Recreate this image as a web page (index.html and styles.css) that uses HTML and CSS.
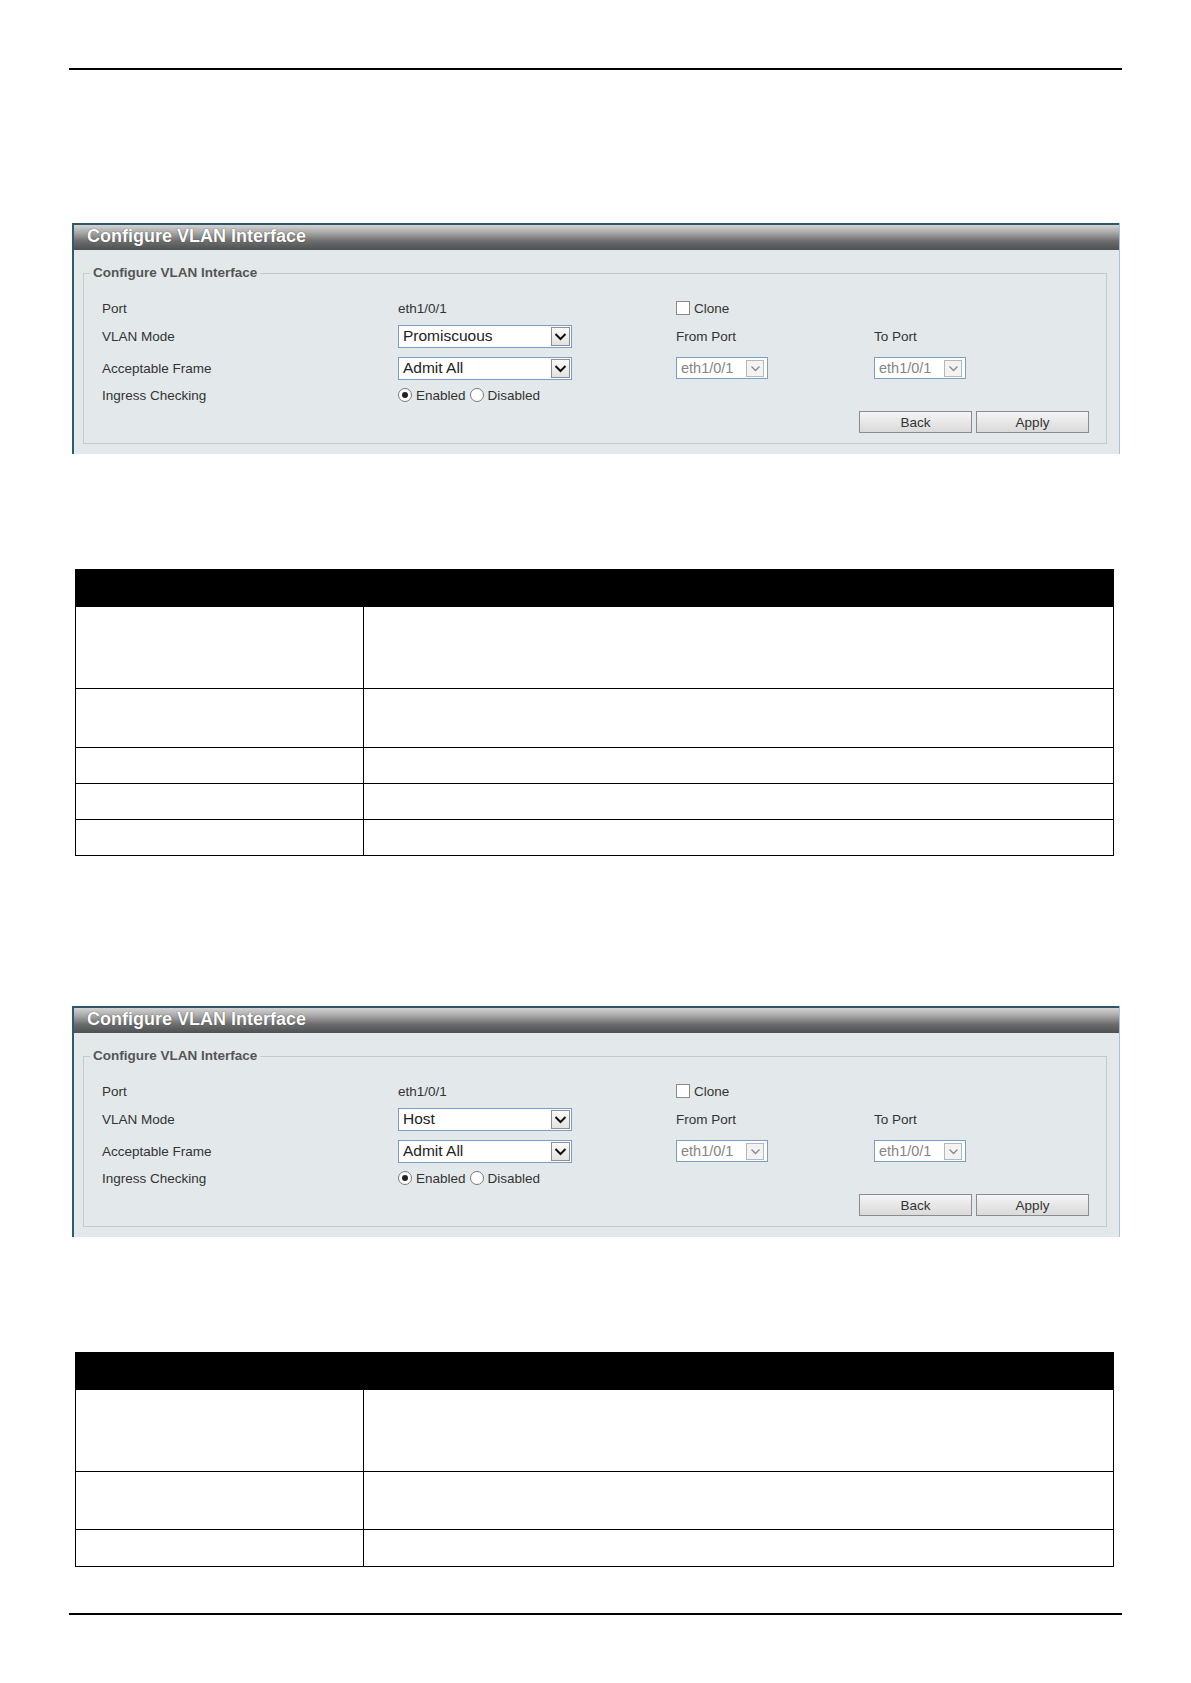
FILE: index.html
```html
<!DOCTYPE html>
<html lang="en">
<head>
    <meta charset="UTF-8">
    <title>Configure VLAN Interface</title>
    <link rel="stylesheet" href="styles.css">
</head>
<body>
    <div class="page">
        <div class="rule rule-top"></div>

        <div class="panel panel-first">
            <div class="panel-title">Configure VLAN Interface</div>
            <fieldset class="group">
                <legend>Configure VLAN Interface</legend>
                <div class="form-grid">
                    <div class="label">Port</div>
                    <div class="value">eth1/0/1</div>
                    <div class="value"><span class="checkbox"></span>Clone</div>
                    <div></div>

                    <div class="label">VLAN Mode</div>
                    <div class="value">
                        <div class="select">
                            <span class="select-text">Promiscuous</span>
                            <span class="select-arrow"><svg width="13" height="9" viewBox="0 0 13 9"><path d="M1.5 2 L6.5 7 L11.5 2" fill="none" stroke="#111" stroke-width="2"/></svg></span>
                        </div>
                    </div>
                    <div class="label">From Port</div>
                    <div class="label">To Port</div>

                    <div class="label">Acceptable Frame</div>
                    <div class="value">
                        <div class="select">
                            <span class="select-text">Admit All</span>
                            <span class="select-arrow"><svg width="13" height="9" viewBox="0 0 13 9"><path d="M1.5 2 L6.5 7 L11.5 2" fill="none" stroke="#111" stroke-width="2"/></svg></span>
                        </div>
                    </div>
                    <div class="value">
                        <div class="select small">
                            <span class="select-text">eth1/0/1</span>
                            <span class="select-arrow"><svg width="11" height="7" viewBox="0 0 11 7"><path d="M1.5 1.5 L5.5 5.5 L9.5 1.5" fill="none" stroke="#888" stroke-width="1.3"/></svg></span>
                        </div>
                    </div>
                    <div class="value">
                        <div class="select small">
                            <span class="select-text">eth1/0/1</span>
                            <span class="select-arrow"><svg width="11" height="7" viewBox="0 0 11 7"><path d="M1.5 1.5 L5.5 5.5 L9.5 1.5" fill="none" stroke="#888" stroke-width="1.3"/></svg></span>
                        </div>
                    </div>

                    <div class="label">Ingress Checking</div>
                    <div class="value radios">
                        <span class="radio checked"></span>Enabled
                        <span class="radio"></span>Disabled
                    </div>
                    <div></div>
                    <div></div>
                </div>
                <div class="actions">
                    <button class="btn">Back</button>
                    <button class="btn">Apply</button>
                </div>
            </fieldset>
        </div>

        <table class="param-table table-first">
            <tr class="head"><th class="col-name"></th><th></th></tr>
            <tr class="h82"><td></td><td></td></tr>
            <tr class="h59"><td></td><td></td></tr>
            <tr class="h36"><td></td><td></td></tr>
            <tr class="h36"><td></td><td></td></tr>
            <tr class="h36"><td></td><td></td></tr>
        </table>

        <div class="panel panel-second">
            <div class="panel-title">Configure VLAN Interface</div>
            <fieldset class="group">
                <legend>Configure VLAN Interface</legend>
                <div class="form-grid">
                    <div class="label">Port</div>
                    <div class="value">eth1/0/1</div>
                    <div class="value"><span class="checkbox"></span>Clone</div>
                    <div></div>

                    <div class="label">VLAN Mode</div>
                    <div class="value">
                        <div class="select">
                            <span class="select-text">Host</span>
                            <span class="select-arrow"><svg width="13" height="9" viewBox="0 0 13 9"><path d="M1.5 2 L6.5 7 L11.5 2" fill="none" stroke="#111" stroke-width="2"/></svg></span>
                        </div>
                    </div>
                    <div class="label">From Port</div>
                    <div class="label">To Port</div>

                    <div class="label">Acceptable Frame</div>
                    <div class="value">
                        <div class="select">
                            <span class="select-text">Admit All</span>
                            <span class="select-arrow"><svg width="13" height="9" viewBox="0 0 13 9"><path d="M1.5 2 L6.5 7 L11.5 2" fill="none" stroke="#111" stroke-width="2"/></svg></span>
                        </div>
                    </div>
                    <div class="value">
                        <div class="select small">
                            <span class="select-text">eth1/0/1</span>
                            <span class="select-arrow"><svg width="11" height="7" viewBox="0 0 11 7"><path d="M1.5 1.5 L5.5 5.5 L9.5 1.5" fill="none" stroke="#888" stroke-width="1.3"/></svg></span>
                        </div>
                    </div>
                    <div class="value">
                        <div class="select small">
                            <span class="select-text">eth1/0/1</span>
                            <span class="select-arrow"><svg width="11" height="7" viewBox="0 0 11 7"><path d="M1.5 1.5 L5.5 5.5 L9.5 1.5" fill="none" stroke="#888" stroke-width="1.3"/></svg></span>
                        </div>
                    </div>

                    <div class="label">Ingress Checking</div>
                    <div class="value radios">
                        <span class="radio checked"></span>Enabled
                        <span class="radio"></span>Disabled
                    </div>
                    <div></div>
                    <div></div>
                </div>
                <div class="actions">
                    <button class="btn">Back</button>
                    <button class="btn">Apply</button>
                </div>
            </fieldset>
        </div>

        <table class="param-table table-second">
            <tr class="head"><th class="col-name"></th><th></th></tr>
            <tr class="h82"><td></td><td></td></tr>
            <tr class="h58"><td></td><td></td></tr>
            <tr class="h37"><td></td><td></td></tr>
        </table>

        <div class="rule rule-bottom"></div>
    </div>
</body>
</html>
```

FILE: styles.css
```css
* {
    box-sizing: border-box;
}
body {
    margin: 0;
    background: #fff;
    font-family: "Liberation Sans", Arial, sans-serif;
}
.page {
    width: 1053px;
    margin-left: 69px;
    padding-top: 68px;
    padding-bottom: 60px;
}
.rule {
    height: 2px;
    background: #000;
}
.rule-bottom {
    margin-top: 46px;
}

/* configuration panel */
.panel {
    width: 1048px;
    margin-left: 3px;
    background: #e3e9ea;
    border-left: 2px solid #2f5b70;
    border-right: 1px solid #a9c3d0;
    padding-bottom: 10px;
}
.panel-first {
    margin-top: 153px;
}
.panel-second {
    margin-top: 150px;
}
.panel-title {
    height: 27px;
    border-top: 2px solid #2d5669;
    background: linear-gradient(to bottom, #d4d4d4 0%, #a9a9a9 30%, #6c6c6c 65%, #4c5152 100%);
    color: #fff;
    font-size: 18px;
    font-weight: bold;
    line-height: 22px;
    padding-left: 13px;
    text-shadow: 0 0 1px #333;
}
.group {
    margin: 15px 12px 0 9px;
    border: 1px solid #c3cbcc;
    padding: 15px 17px 10px 18px;
}
.group legend {
    margin-left: -12px;
    padding: 0 3px;
    font-size: 13.5px;
    font-weight: bold;
    line-height: 16px;
    color: #555;
}
.form-grid {
    display: grid;
    grid-template-columns: 296px 278px 198px 1fr;
    grid-template-rows: 24px 32px 32px 22px;
    align-items: center;
    font-size: 13.5px;
    color: #333;
}
.value {
    display: flex;
    align-items: center;
}

/* select boxes */
.select {
    display: flex;
    align-items: center;
    width: 174px;
    height: 23px;
    background: #fff;
    border: 1px solid #7b9ec3;
}
.select-text {
    flex: 1;
    padding-left: 4px;
    font-size: 15.5px;
    color: #222;
}
.select-arrow {
    display: flex;
    align-items: center;
    justify-content: center;
    width: 19px;
    height: 19px;
    margin-right: 1px;
    border: 1px solid #8e8e8e;
    background: linear-gradient(#fbfbfb, #e2e2e2);
}
.select.small {
    width: 92px;
    height: 22px;
}
.select.small .select-text {
    font-size: 14.5px;
    color: #858585;
}
.select.small .select-arrow {
    width: 18px;
    height: 17px;
    margin-right: 3px;
    border-color: #b7b7b7;
    background: #f3f3f3;
}

/* checkbox and radios */
.checkbox {
    display: inline-block;
    width: 14px;
    height: 14px;
    margin-right: 4px;
    background: #fff;
    border: 1px solid #8a8a8a;
}
.radio {
    display: inline-block;
    position: relative;
    width: 14px;
    height: 14px;
    margin-right: 4px;
    border-radius: 50%;
    border: 1px solid #7a7a7a;
    background: #fff;
}
.radios .radio:nth-of-type(2) {
    margin-left: 4px;
}
.radio.checked::after {
    content: "";
    position: absolute;
    left: 3px;
    top: 3px;
    width: 6px;
    height: 6px;
    border-radius: 50%;
    background: #222;
}

/* buttons */
.actions {
    display: flex;
    justify-content: flex-end;
    gap: 4px;
    margin-top: 5px;
}
.btn {
    width: 113px;
    height: 22px;
    padding: 0;
    font-family: "Liberation Sans", Arial, sans-serif;
    font-size: 13.5px;
    color: #333;
    border: 1px solid #8c8c8c;
    background: linear-gradient(#f4f4f4, #dadada);
}

/* parameter tables */
.param-table {
    width: 1039px;
    margin-left: 6px;
    border-collapse: collapse;
    border: 1.5px solid #000;
}
.table-first,
.table-second {
    margin-top: 115px;
}
.param-table th,
.param-table td {
    border: 1px solid #000;
    padding: 0;
}
.param-table .head {
    height: 37px;
    background: #000;
}
.col-name {
    width: 288px;
}
.h82 { height: 82px; }
.h58 { height: 58px; }
.h59 { height: 59px; }
.h36 { height: 36px; }
.h37 { height: 37px; }
```
